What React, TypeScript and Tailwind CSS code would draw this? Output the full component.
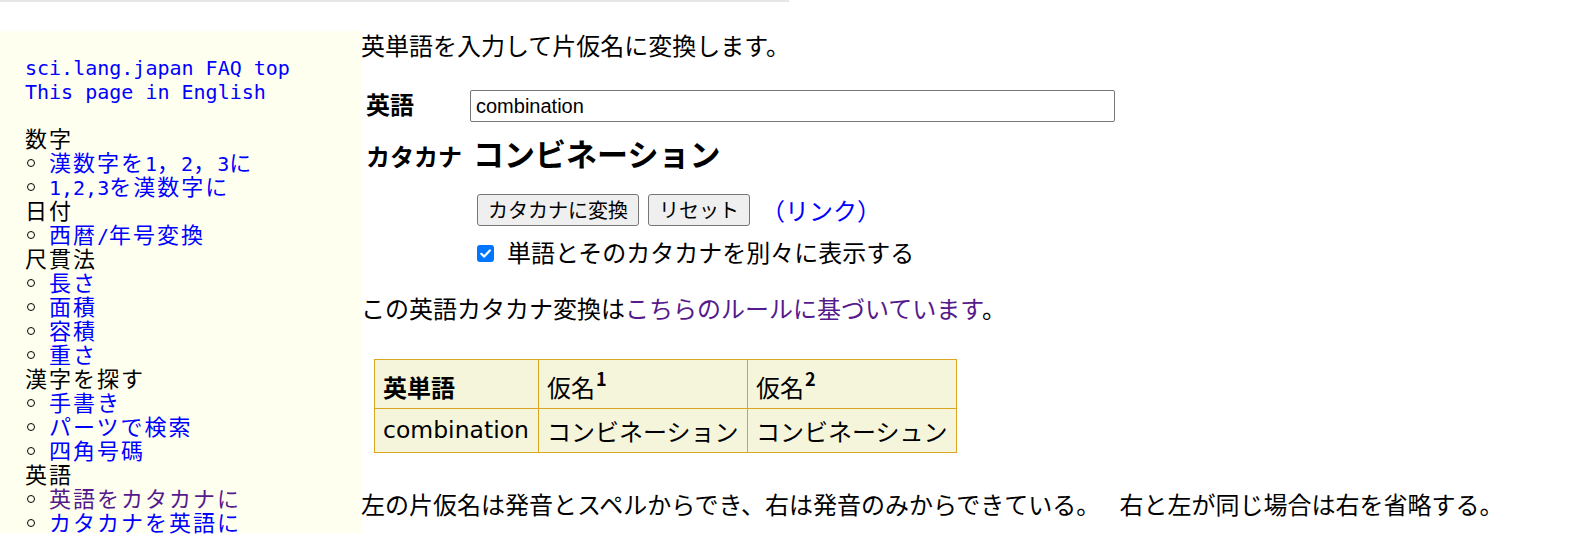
import React from "react";

const MONO = "font-['DejaVu_Sans_Mono'] text-[20px] tracking-normal";

function Mixed({ s }: { s: string }) {
  const parts = s.split(/([\x20-\x7E]+)/).filter((p) => p.length > 0);
  return (
    <>
      {parts.map((p, i) =>
        /^[\x20-\x7E]+$/.test(p) ? (
          <span key={i} className={MONO}>
            {p}
          </span>
        ) : (
          <React.Fragment key={i}>{p}</React.Fragment>
        )
      )}
    </>
  );
}

type Item = { k: "link" | "head" | "bullet" | "blank"; t?: string; v?: boolean };

const items: Item[] = [
  { k: "link", t: "sci.lang.japan FAQ top" },
  { k: "link", t: "This page in English" },
  { k: "blank" },
  { k: "head", t: "数字" },
  { k: "bullet", t: "漢数字を1，2，3に" },
  { k: "bullet", t: "1,2,3を漢数字に" },
  { k: "head", t: "日付" },
  { k: "bullet", t: "西暦/年号変換" },
  { k: "head", t: "尺貫法" },
  { k: "bullet", t: "長さ" },
  { k: "bullet", t: "面積" },
  { k: "bullet", t: "容積" },
  { k: "bullet", t: "重さ" },
  { k: "head", t: "漢字を探す" },
  { k: "bullet", t: "手書き" },
  { k: "bullet", t: "パーツで検索" },
  { k: "bullet", t: "四角号碼" },
  { k: "head", t: "英語" },
  { k: "bullet", t: "英語をカタカナに", v: true },
  { k: "bullet", t: "カタカナを英語に" },
];

function Sidebar() {
  return (
    <aside className="w-[361px] shrink-0 bg-[#fffff0] pt-[22px] pl-[25px] font-['Noto_Sans_CJK_JP'] text-[22px] tracking-[2px] leading-[24px] text-black">
      {items.map((it, i) => (
        <div key={i} className="h-[24px] flex whitespace-nowrap">
          {it.k === "bullet" && (
            <span className="w-[24px] shrink-0 flex items-start">
              <span className="mt-[10px] ml-[2px] w-[8px] h-[8px] rounded-full border-[1.5px] border-black" />
            </span>
          )}
          {it.k === "head" && (
            <span>
              <Mixed s={it.t!} />
            </span>
          )}
          {(it.k === "link" || it.k === "bullet") && (
            <a href="#" className={it.v ? "text-[#551a8b]" : "text-[#0000ff]"}>
              <Mixed s={it.t!} />
            </a>
          )}
        </div>
      ))}
    </aside>
  );
}

const cellH =
  "h-[49px] border-r border-b border-[#daa520] px-[8px] pt-[9px] leading-[35px] whitespace-nowrap";
const cellB =
  "h-[44px] border-r border-b border-[#daa520] px-[8px] pt-[4px] leading-[35px] whitespace-nowrap";

function Main() {
  return (
    <main className="flex-1 font-['Noto_Sans_CJK_JP'] text-[24px] text-black whitespace-nowrap">
      <p className="leading-[28px]">英単語を入力して片仮名に変換します。</p>

      <div className="mt-[29px] flex items-center h-[36px]">
        <div className="w-[109px] pl-[5px] font-bold leading-[28px] mb-[4px]">英語</div>
        <input
          type="text"
          defaultValue="combination"
          className="w-[645px] h-[32px] border border-[#767676] rounded-[2px] pl-[5px] font-['Liberation_Sans'] text-[20px] bg-white text-black outline-none"
        />
      </div>

      <div className="mt-[9px] flex items-baseline">
        <div className="w-[109px] pl-[5px] font-bold leading-[32px]">カタカナ</div>
        <div className="pl-[3px] text-[31px] font-bold leading-[40px]">コンビネーション</div>
      </div>

      <div className="mt-[21px] h-[32px] flex items-center pl-[116px]">
        <button
          type="button"
          className="h-[32px] px-[10px] border border-[#767676] rounded-[3px] bg-[#efefef] text-[20px] leading-[30px] text-black"
        >
          カタカナに変換
        </button>
        <button
          type="button"
          className="ml-[9px] h-[32px] px-[10px] border border-[#767676] rounded-[3px] bg-[#efefef] text-[20px] leading-[30px] text-black"
        >
          リセット
        </button>
        <a href="#" className="ml-[11px] text-[#0000ff] leading-[32px]">
          （リンク）
        </a>
      </div>

      <div className="mt-[9px] h-[36px] flex items-center pl-[116px]">
        <span className="w-[17px] h-[17px] shrink-0 rounded-[3px] bg-[#0075ff] flex items-center justify-center">
          <svg width="13" height="13" viewBox="0 0 13 13" fill="none">
            <path
              d="M2.3 6.8 L5.2 9.6 L10.8 3.4"
              stroke="white"
              strokeWidth="2.2"
              strokeLinecap="round"
              strokeLinejoin="round"
            />
          </svg>
        </span>
        <span className="ml-[13px] leading-[32px] mb-[2px]">単語とそのカタカナを別々に表示する</span>
      </div>

      <p className="mt-[23px] leading-[28px]">
        この英語カタカナ変換は
        <a href="#" className="text-[#551a8b]">
          こちらのルールに基づいています
        </a>
        。
      </p>

      <div className="ml-[13px] mt-[37px] grid w-fit grid-cols-[164px_209px_209px] border-l border-t border-[#daa520] bg-[#f5f5dc]">
        <div className={cellH + " font-bold"}>英単語</div>
        <div className={cellH}>
          仮名<span className="relative -top-[11px] ml-[1px] text-[18px] font-bold leading-none">1</span>
        </div>
        <div className={cellH}>
          仮名<span className="relative -top-[11px] ml-[1px] text-[18px] font-bold leading-none">2</span>
        </div>
        <div className={cellB + " font-['DejaVu_Sans'] text-[23.5px]"}>combination</div>
        <div className={cellB}>コンビネーション</div>
        <div className={cellB}>コンビネーシュン</div>
      </div>

      <p className="mt-[37px] leading-[28px]">
        <span className="mr-[14px]">左の片仮名は発音とスペルからでき、右は発音のみからできている。</span> 右と左が同じ場合は右を省略する。
      </p>
    </main>
  );
}

export default function App() {
  return (
    <div className="w-[1595px] h-[534px] overflow-hidden bg-white">
      <div className="w-[789px] h-[2px] bg-[#e6e6e6]" />
      <div className="mt-[29px] flex items-stretch">
        <Sidebar />
        <Main />
      </div>
    </div>
  );
}
